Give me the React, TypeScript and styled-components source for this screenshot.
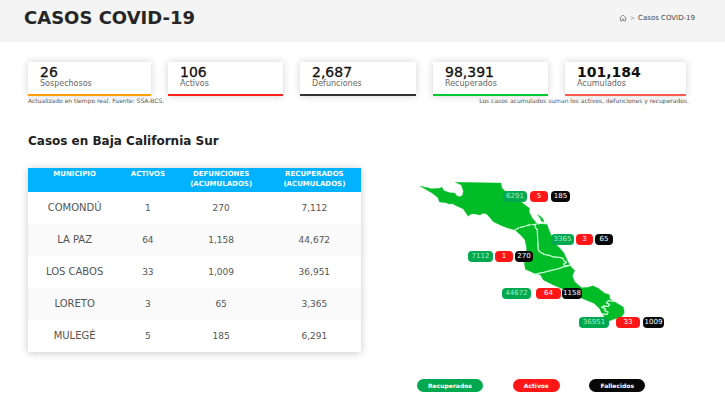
import React from "react";
import styled, { createGlobalStyle } from "styled-components";

const GREEN = "#00a94f";
const RED = "#ff1717";
const BLACK = "#080808";

const GlobalStyle = createGlobalStyle`
  *, *::before, *::after { box-sizing: border-box; }
  body {
    margin: 0;
    background: #fff;
    color: #555;
    font-family: "DejaVu Sans", sans-serif;
  }
`;

const PageHeader = styled.header`
  display: flex;
  align-items: center;
  justify-content: space-between;
  padding: 8px 30px 14px 24px;
  background: #f4f4f4;
`;

const Title = styled.h1`
  margin: 0;
  color: #262626;
  font-size: 18px;
  line-height: 20px;
`;

const Breadcrumb = styled.nav`
  display: flex;
  align-items: center;
  gap: 3px;
  color: #444;
  font-size: 7px;
  line-height: 8px;

  a { display: flex; color: #777; }
`;

const Separator = styled.span`
  color: #888;
  font-size: 6px;
`;

const Main = styled.main`
  padding: 20px 39px 8px 28px;
`;

const Cards = styled.section`
  display: grid;
  grid-template-columns: 123fr 115fr 116fr 115fr 121fr;
  gap: 17px;
`;

const Card = styled.article<{ $accent: string }>`
  padding: 2px 12px 6px;
  border-bottom: 2px solid ${(p) => p.$accent};
  background: #fff;
  box-shadow: 0 0 8px rgba(0, 0, 0, 0.18);
`;

const Figure = styled.div<{ $strong?: boolean }>`
  color: #111;
  font-size: 14px;
  font-weight: ${(p) => (p.$strong ? 700 : 400)};
  line-height: 16px;
  -webkit-text-stroke: ${(p) => (p.$strong ? "0" : "0.3px #111")};
`;

const Label = styled.div`
  color: #666;
  font-size: 8px;
  line-height: 8px;
`;

const Notes = styled.div`
  display: flex;
  justify-content: space-between;
  margin-right: -3px;
  padding-top: 1px;
  font-size: 6px;
  line-height: 8px;
`;

const Heading = styled.h2`
  margin: 29px 0 19px;
  color: #222;
  font-size: 12px;
  line-height: 15px;
`;

const Content = styled.section`
  display: grid;
  grid-template-columns: 333fr 250fr;
  align-items: start;
  gap: 54px;
  padding-right: 21px;
`;

const Table = styled.table`
  width: 100%;
  border-collapse: collapse;
  table-layout: fixed;
  background: #fff;
  box-shadow: 0 1px 8px rgba(0, 0, 0, 0.22);
  text-align: center;
`;

const Column = styled.col<{ $width: string }>`
  width: ${(p) => p.$width};
`;

const HeadCell = styled.th`
  padding: 1px 0 3px;
  background: #00b2ff;
  color: #fff;
  font-size: 7px;
  line-height: 10px;
  vertical-align: top;
`;

const Row = styled.tr`
  &:nth-child(even) { background: #fafafa; }
`;

const Cell = styled.td`
  height: 32px;
  padding: 0;
  color: #555;
  font-size: 9px;
  line-height: 12px;

  &:first-child { font-size: 10px; }
`;

const MapPanel = styled.div`
  padding-top: 7px;
`;

const MapArea = styled.div`
  position: relative;
  aspect-ratio: 250 / 160;

  svg { display: block; width: 100%; height: 100%; }
`;

const Pin = styled.span<{ $x: number; $y: number; $width: number; $color: string; $dim: boolean }>`
  position: absolute;
  left: ${(p) => p.$x / 2.5}%;
  top: ${(p) => p.$y / 1.6}%;
  width: ${(p) => p.$width}px;
  height: 11px;
  border-radius: 4px;
  background: ${(p) => p.$color};
  color: ${(p) => (p.$dim ? "#a5efc4" : "#fff")};
  font-size: 7px;
  line-height: 11px;
  text-align: center;
`;

const Legend = styled.div`
  display: flex;
  justify-content: space-between;
  padding: 44px 20px 0 2px;
`;

const LegendItem = styled.span<{ $color: string }>`
  padding: 0 11px;
  border-radius: 7px;
  background: ${(p) => p.$color};
  color: #fff;
  font-size: 6px;
  font-weight: 700;
  line-height: 13px;
`;

const cards = [
  { value: "26", label: "Sospechosos", accent: "#ff9f0a" },
  { value: "106", label: "Activos", accent: "#f9241c" },
  { value: "2,687", label: "Defunciones", accent: "#333" },
  { value: "98,391", label: "Recuperados", accent: "#00c832" },
  { value: "101,184", label: "Acumulados", accent: "#fa5c50", strong: true },
];

const rows = [
  ["COMONDÚ", "1", "270", "7,112"],
  ["LA PAZ", "64", "1,158", "44,672"],
  ["LOS CABOS", "33", "1,009", "36,951"],
  ["LORETO", "3", "65", "3,365"],
  ["MULEGÉ", "5", "185", "6,291"],
];

const pins = [
  { y: 16, items: [["6291", 88, 24], ["5", 115, 18], ["185", 136, 19]] },
  { y: 59, items: [["3365", 136, 23], ["3", 161, 17], ["65", 180, 18]] },
  { y: 76, items: [["7112", 53, 25], ["1", 80, 18], ["270", 100, 18]] },
  { y: 113, items: [["44672", 87, 29], ["64", 121, 25], ["1158", 147, 20]] },
  { y: 142, items: [["36951", 164, 30], ["33", 201, 24], ["1009", 228, 21]] },
] as { y: number; items: [string, number, number][] }[];

const pinColors = [GREEN, RED, BLACK];

const HomeIcon = () => (
  <svg width="8" height="8" viewBox="0 0 16 16" fill="none" stroke="currentColor" strokeWidth="1.5">
    <path d="M1 8.5 8 2l7 6.500M3 7v7h3.500v-4h3v4H13V7" />
  </svg>
);

const StateMap = () => (
  <svg viewBox="45 30 750 480" role="img" aria-label="Baja California Sur">
    <g fill="#00bc27" stroke="#00bc27" strokeWidth="1" strokeLinejoin="round">
      <path d="M60 63 95 71 120 70 125 66 132 77 150 83 164 84 170 92 180 95 188 90 190 78 184 60 166 52 303 54 306 70 318 80 345 98 368 114 388 130 388 142 396 158 411 176 440 176 449 200 463 234 480 250 492 264 501 285 511 303 524 317 517 333 524 350 545 368 565 367 578 362 595 370 613 384 628 389 630 402 643 410 670 426 673 443 665 455 641 463 627 468 613 455 605 444 598 430 582 415 545 400 490 373 460 360 430 345 421 329 403 325 376 313 373 295 380 250 375 225 362 210 345 195 325 190 305 182 280 170 265 152 258 146 249 145 240 150 222 146 211 148 205 154 198 144 190 132 172 124 157 116 146 117 138 113 118 111 114 98 96 84Z" />
      <path d="M412 149 423 155 430 164 432 171 424 169 421 160Z" />
    </g>
    <g fill="none" stroke="#c9ffd8" strokeWidth="4" strokeLinejoin="round" strokeLinecap="round">
      <path strokeDasharray="13 5" d="M345 195 357 188 374 184 387 180 405 178 421 175 440 176" />
      <path d="M405 178 406 187 412 195 413 222 415 255 420 261 433 268 448 271 460 276 478 277 489 280 491 286 499 292 491 297 494 303 508 301" />
      <path d="M405 329 415 325 431 322 454 316 476 311 493 305 510 301" />
      <path d="M641 409 625 407 619 414 629 418 625 424 611 423 605 427 616 431 614 437 624 441 621 448 605 447" />
    </g>
  </svg>
);

export default function App() {
  return (
    <>
      <GlobalStyle />
      <PageHeader>
        <Title>CASOS COVID-19</Title>
        <Breadcrumb aria-label="Ruta">
          <a href="#inicio" aria-label="Inicio"><HomeIcon /></a>
          <Separator>&gt;</Separator>
          <span>Casos COVID-19</span>
        </Breadcrumb>
      </PageHeader>
      <Main>
        <Cards>
          {cards.map((c) => (
            <Card key={c.label} $accent={c.accent}>
              <Figure $strong={c.strong}>{c.value}</Figure>
              <Label>{c.label}</Label>
            </Card>
          ))}
        </Cards>
        <Notes>
          <span>Actualizado en tiempo real. Fuente: SSA-BCS.</span>
          <span>Los casos acumulados suman los activos, defunciones y recuperados.</span>
        </Notes>
        <Heading>Casos en Baja California Sur</Heading>
        <Content>
          <Table>
            <colgroup>
              <Column $width="28%" />
              <Column $width="16%" />
              <Column $width="28%" />
              <Column $width="28%" />
            </colgroup>
            <thead>
              <tr>
                <HeadCell scope="col">MUNICIPIO</HeadCell>
                <HeadCell scope="col">ACTIVOS</HeadCell>
                <HeadCell scope="col">DEFUNCIONES<br />(ACUMULADOS)</HeadCell>
                <HeadCell scope="col">RECUPERADOS<br />(ACUMULADOS)</HeadCell>
              </tr>
            </thead>
            <tbody>
              {rows.map((r) => (
                <Row key={r[0]}>
                  {r.map((v, i) => <Cell key={i}>{v}</Cell>)}
                </Row>
              ))}
            </tbody>
          </Table>
          <MapPanel>
            <MapArea>
              <StateMap />
              {pins.map((group) =>
                group.items.map(([text, x, width], i) => (
                  <Pin key={text} $x={x} $y={group.y} $width={width} $color={pinColors[i]} $dim={i === 0}>
                    {text}
                  </Pin>
                ))
              )}
            </MapArea>
            <Legend>
              <LegendItem $color={GREEN}>Recuperados</LegendItem>
              <LegendItem $color={RED}>Activos</LegendItem>
              <LegendItem $color={BLACK}>Fallecidos</LegendItem>
            </Legend>
          </MapPanel>
        </Content>
      </Main>
    </>
  );
}
